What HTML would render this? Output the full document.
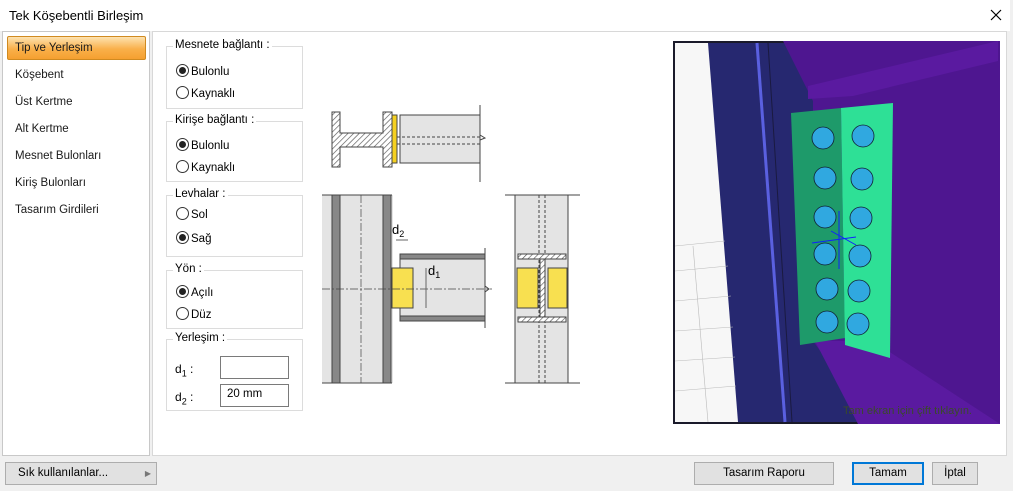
<!DOCTYPE html>
<html><head><meta charset="utf-8"><style>
*{box-sizing:border-box;margin:0;padding:0}
body{width:1013px;height:491px;overflow:hidden;background:#f0f0f0;font-family:"Liberation Sans",sans-serif;font-size:12px;color:#000;position:relative}
.abs{position:absolute}
.title{left:0;top:0;width:1010px;height:31px;background:#fff}
.title span{position:absolute;left:9px;top:8px;font-size:13px}
.left{left:2px;top:31px;width:148px;height:425px;background:#fff;border:1px solid #c8c8c8}
.item{position:absolute;left:12px;font-size:11.5px;color:#1a1a1a}
.sel{position:absolute;left:4px;top:4px;width:139px;height:24px;border:1px solid #d08a20;border-radius:2px;background:linear-gradient(#fde2b0,#f9b04a 55%,#f5a030)}
.main{left:152px;top:31px;width:855px;height:425px;background:#fff;border:1px solid #d8d8d8}
.grp{position:absolute;left:166px;width:137px;border:1px solid #dcdcdc}
.grp .lg{position:absolute;left:6px;top:-8px;background:#fff;padding:0 2px;font-size:11.5px}
.rad{position:absolute;left:9px;font-size:11.5px}
.rad i{display:inline-block;width:13px;height:13px;border:1px solid #333;border-radius:50%;vertical-align:-2px;margin-right:2px;position:relative}
.rad i.on:after{content:"";position:absolute;left:2px;top:2px;width:7px;height:7px;border-radius:50%;background:#222}
.inp{position:absolute;border:1px solid #7a7a7a;background:#fff;width:69px;height:23px;font-size:11.5px;padding:3px 6px}
.btn{position:absolute;top:462px;height:23px;border:1px solid #adadad;background:#e1e1e1;font-size:11.5px;text-align:center;line-height:21px}
</style></head><body>
<div class="abs title"><span>Tek Köşebentli Birleşim</span>
<svg class="abs" style="left:990px;top:9px" width="12" height="12"><path d="M1 1L11 11M11 1L1 11" stroke="#000" stroke-width="1.2"/></svg></div>
<div class="abs left">
<div class="sel"></div>
<div class="item" style="top:10px">Tip ve Yerleşim</div>
<div class="item" style="top:37px">Köşebent</div>
<div class="item" style="top:64px">Üst Kertme</div>
<div class="item" style="top:91px">Alt Kertme</div>
<div class="item" style="top:118px">Mesnet Bulonları</div>
<div class="item" style="top:145px">Kiriş Bulonları</div>
<div class="item" style="top:172px">Tasarım Girdileri</div>
</div>
<div class="abs main"></div>
<div class="grp" style="top:46px;height:63px"><span class="lg">Mesnete bağlantı :</span>
<div class="rad" style="top:17px"><i class="on"></i>Bulonlu</div><div class="rad" style="top:39px"><i></i>Kaynaklı</div></div>
<div class="grp" style="top:121px;height:61px"><span class="lg">Kirişe bağlantı :</span>
<div class="rad" style="top:16px"><i class="on"></i>Bulonlu</div><div class="rad" style="top:38px"><i></i>Kaynaklı</div></div>
<div class="grp" style="top:195px;height:62px"><span class="lg">Levhalar :</span>
<div class="rad" style="top:11px"><i></i>Sol</div><div class="rad" style="top:35px"><i class="on"></i>Sağ</div></div>
<div class="grp" style="top:270px;height:59px"><span class="lg">Yön :</span>
<div class="rad" style="top:14px"><i class="on"></i>Açılı</div><div class="rad" style="top:36px"><i></i>Düz</div></div>
<div class="grp" style="top:339px;height:72px"><span class="lg">Yerleşim :</span>
<div class="abs" style="left:8px;top:22px;font-size:12px">d<sub style="font-size:9px">1</sub> :</div>
<div class="abs" style="left:8px;top:50px;font-size:12px">d<sub style="font-size:9px">2</sub> :</div>
<div class="inp" style="left:53px;top:16px"></div>
<div class="inp" style="left:53px;top:44px">20 mm</div></div>

<svg class="abs" style="left:0;top:0" width="670" height="460">
<defs><pattern id="h" width="4" height="4" patternUnits="userSpaceOnUse" patternTransform="rotate(45)"><rect width="4" height="4" fill="#fff"/><line x1="0" y1="0" x2="0" y2="4" stroke="#555" stroke-width="1.3"/></pattern></defs>
<g stroke="#444" stroke-width="1">
<path d="M332 112h8v21h43v-21h9v55h-9v-20h-43v20h-8z" fill="url(#h)"/>
<rect x="392" y="115" width="5" height="48" fill="#f5d020"/>
<rect x="400" y="115" width="80" height="48" fill="#e4e4e4"/>
<path d="M480 105v30l5 3-5 2v42" fill="none"/>
<path d="M397 137h83M397 144h83" stroke-dasharray="3 2" fill="none"/>
<rect x="322" y="195" width="71" height="188" fill="#e4e4e4" stroke="none"/>
<path d="M322 195h70M322 383h70M505 195h75M505 383h75" />
<rect x="332" y="195" width="8" height="188" fill="#888"/>
<rect x="383" y="195" width="8" height="188" fill="#888"/>
<rect x="400" y="258" width="85" height="58" fill="#e4e4e4"/>
<rect x="400" y="254" width="85" height="5" fill="#888"/>
<rect x="400" y="316" width="85" height="5" fill="#888"/>
<rect x="392" y="268" width="21" height="40" fill="#f8e050"/>
<path d="M485 248v38l4 3-4 3v36" fill="none"/>
<path d="M322 289h170M361 195v188" stroke-dasharray="8 2 2 2" stroke-width=".7" fill="none"/>
<path d="M426 268v40M396 240h12" stroke="#666" fill="none"/>
<rect x="515" y="195" width="53" height="188" fill="#e4e4e4"/>
<path d="M539 195v188M545 195v188" stroke-dasharray="3 2" fill="none"/>
<rect x="517" y="268" width="21" height="40" fill="#f8e050"/>
<rect x="548" y="268" width="19" height="40" fill="#f8e050"/>
<rect x="518" y="254" width="48" height="5" fill="url(#h)"/>
<rect x="518" y="317" width="48" height="5" fill="url(#h)"/>
<path d="M540 259h5v58h-5z" fill="url(#h)"/>
</g>
<text x="392" y="234" font-size="13" font-family="Liberation Sans">d<tspan font-size="9" dy="3">2</tspan></text>
<text x="428" y="275" font-size="13" font-family="Liberation Sans">d<tspan font-size="9" dy="3">1</tspan></text>
</svg>

<svg class="abs" style="left:673px;top:41px" width="327" height="383">
<rect width="327" height="383" fill="#262870"/>
<rect x="1" y="1" width="325" height="381" fill="none" stroke="#1a1a2a" stroke-width="2"/>
<path d="M2 2h33l30 379H2z" fill="#f7f7f7"/>
<path d="M2 205L52 200M2 230L55 225M2 260L58 255M2 290L60 286M2 320L62 316M20 205L35 381M2 350L63 345" stroke="#bbb" stroke-width=".6"/>
<path d="M84 2l28 379" stroke="#5a60e0" stroke-width="3"/>
<path d="M95 2l24 379" stroke="#1a1a40" stroke-width="1"/>
<path d="M110 0h217v383H200L140 300V60z" fill="#4e1690"/>
<path d="M135 45L325 0v20L180 55l-45 3z" fill="#5a1aa0"/>
<path d="M142 300L200 300 327 383H185z" fill="#5a1aa0"/>
<path d="M118 72l50-5 4 230-45 7z" fill="#1e9a6a"/>
<path d="M168 67l52-5-3 255-45-13z" fill="#2ee096"/>
<g fill="#30a8e0" stroke="#123" stroke-width=".8">
<circle cx="150" cy="97" r="11"/><circle cx="152" cy="137" r="11"/><circle cx="152" cy="176" r="11"/><circle cx="152" cy="213" r="11"/><circle cx="154" cy="248" r="11"/><circle cx="154" cy="281" r="11"/>
<circle cx="190" cy="95" r="11"/><circle cx="189" cy="138" r="11"/><circle cx="188" cy="177" r="11"/><circle cx="187" cy="215" r="11"/><circle cx="186" cy="250" r="11"/><circle cx="185" cy="283" r="11"/></g>
<path d="M166 170v58M139 202l44-6M158 190l25 14" stroke="#1020ff" stroke-width="1"/>
<text x="170" y="373" font-size="11" fill="#3a4a2a" font-family="Liberation Sans">Tam ekran için çift tıklayın.</text>
</svg>

<div class="btn" style="left:5px;width:152px;text-align:left;padding-left:12px">Sık kullanılanlar...<span style="position:absolute;right:5px;font-size:8px;color:#777">▶</span></div>
<div class="btn" style="left:694px;width:140px">Tasarım Raporu</div>
<div class="btn" style="left:852px;width:72px;border:2px solid #0078d7;line-height:19px">Tamam</div>
<div class="btn" style="left:932px;width:46px">İptal</div>
</body></html>
